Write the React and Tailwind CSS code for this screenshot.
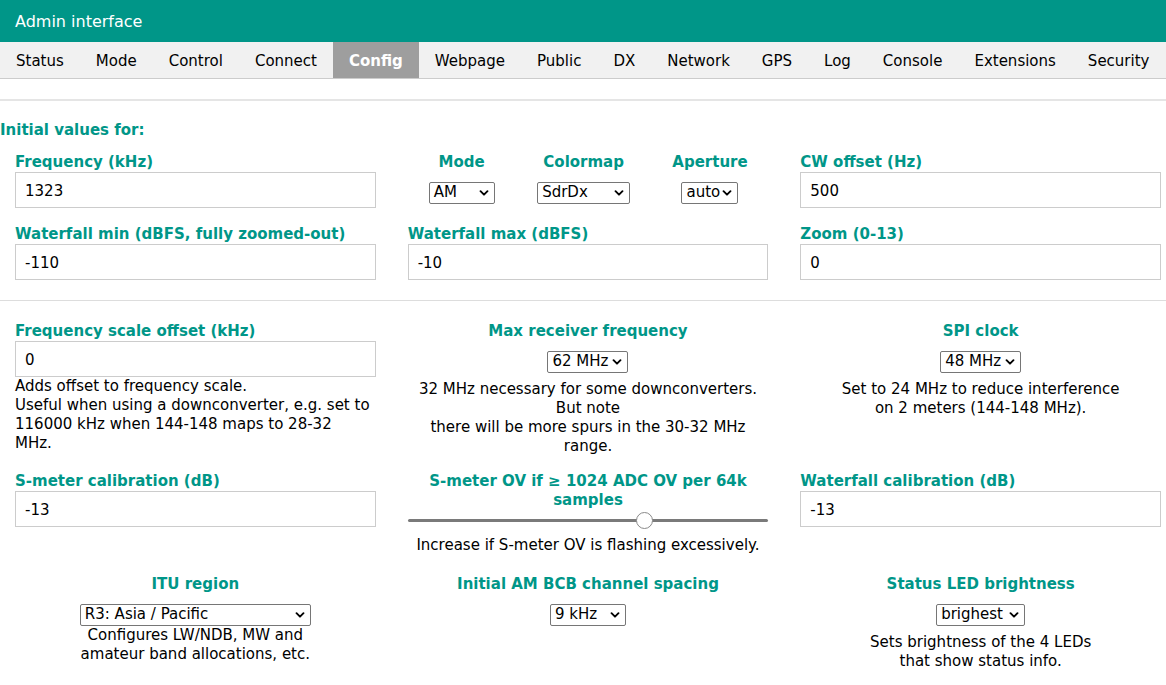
import React from "react";

const tabs = [
  "Status",
  "Mode",
  "Control",
  "Connect",
  "Config",
  "Webpage",
  "Public",
  "DX",
  "Network",
  "GPS",
  "Log",
  "Console",
  "Extensions",
  "Security",
];

const font = { fontFamily: '"DejaVu Sans", Verdana, sans-serif' };

const Chevron = () => (
  <svg className="w-[10px] h-[10px] text-black" viewBox="0 0 10 10" fill="none">
    <path d="M1.5 3.2 L5 6.7 L8.5 3.2" stroke="currentColor" strokeWidth="1.9" strokeLinecap="round" strokeLinejoin="round" />
  </svg>
);

const Select = ({ value, width }) => (
  <div
    className={`inline-flex items-center justify-between h-[22px] border border-[#767676] rounded-[2px] bg-white pl-[4px] pr-[5px] text-[15px] text-black leading-none ${width}`}
  >
    <span>{value}</span>
    <Chevron />
  </div>
);

const Label = ({ children, center = false }) => (
  <div
    className={`text-[15px] font-bold text-[#009688] leading-[19px] ${center ? "text-center" : ""}`}
  >
    {children}
  </div>
);

const Input = ({ value }) => (
  <div className="h-[36px] border border-[#cccccc] flex items-center pl-[9px] pt-[2px] text-[15px] text-black">
    {value}
  </div>
);

const Field = ({ label, value }) => (
  <div>
    <Label>{label}</Label>
    <Input value={value} />
  </div>
);

const Note = ({ children }) => (
  <div className="text-[15px] leading-[19px] text-black text-center">{children}</div>
);

export default function App() {
  return (
    <div className="w-[1166px] h-[685px] bg-white overflow-hidden" style={font}>
      {/* Header */}
      <div className="h-[42px] bg-[#009688] flex items-center pl-[15px] pt-[1px] text-white text-[16px]">
        Admin interface
      </div>

      {/* Tab bar */}
      <div className="h-[37px] bg-[#f1f1f1] border-b border-[#cccccc] flex">
        {tabs.map((t) => (
          <div
            key={t}
            className={`h-[36px] flex items-center pt-[2px] px-[16px] text-[15px] ${
              t === "Config" ? "bg-[#9e9e9e] text-white font-bold" : "text-black"
            }`}
          >
            {t}
          </div>
        ))}
      </div>

      <div className="mt-[20px] border-t-2 border-[#e5e5e5]" />

      {/* Initial values */}
      <div className="mt-[20px] text-[15px] font-bold text-[#009688] leading-[19px]">
        Initial values for:
      </div>

      <div className="grid grid-cols-3 gap-x-[32px] pl-[15px] pr-[5px] mt-[13px]">
        <Field label="Frequency (kHz)" value="1323" />
        <div className="grid grid-cols-[108px_136px_1fr]">
          <div className="flex flex-col items-center">
            <Label center>Mode</Label>
            <div className="mt-[8px]">
              <Select value="AM" width="w-[66px]" />
            </div>
          </div>
          <div className="flex flex-col items-center">
            <Label center>Colormap</Label>
            <div className="mt-[8px]">
              <Select value="SdrDx" width="w-[93px]" />
            </div>
          </div>
          <div className="flex flex-col items-center">
            <Label center>Aperture</Label>
            <div className="mt-[8px]">
              <Select value="auto" width="w-[57px]" />
            </div>
          </div>
        </div>
        <Field label="CW offset (Hz)" value="500" />
      </div>

      <div className="grid grid-cols-3 gap-x-[32px] pl-[15px] pr-[5px] mt-[17px]">
        <Field label="Waterfall min (dBFS, fully zoomed-out)" value="-110" />
        <Field label="Waterfall max (dBFS)" value="-10" />
        <Field label="Zoom (0-13)" value="0" />
      </div>

      <div className="mt-[20px] border-t border-[#dddddd]" />

      {/* Section 2 */}
      <div className="grid grid-cols-3 gap-x-[32px] pl-[15px] pr-[5px] mt-[21px]">
        <div>
          <Field label="Frequency scale offset (kHz)" value="0" />
          <div className="w-[357px] text-[15px] leading-[19px] text-black">
            Adds offset to frequency scale.
            <br />
            Useful when using a downconverter, e.g. set to 116000 kHz when 144-148 maps to 28-32 MHz.
          </div>
        </div>
        <div className="flex flex-col items-center">
          <Label center>Max receiver frequency</Label>
          <div className="mt-[8px]">
            <Select value="62 MHz" width="w-[81px]" />
          </div>
          <div className="mt-[7px]">
            <Note>
              32 MHz necessary for some downconverters. But note
              <br />
              there will be more spurs in the 30-32 MHz range.
            </Note>
          </div>
        </div>
        <div className="flex flex-col items-center">
          <Label center>SPI clock</Label>
          <div className="mt-[8px]">
            <Select value="48 MHz" width="w-[81px]" />
          </div>
          <div className="mt-[7px]">
            <Note>
              Set to 24 MHz to reduce interference
              <br />
              on 2 meters (144-148 MHz).
            </Note>
          </div>
        </div>
      </div>

      <div className="grid grid-cols-3 gap-x-[32px] pl-[15px] pr-[5px] mt-[16px]">
        <Field label="S-meter calibration (dB)" value="-13" />
        <div>
          <Label center>
            S-meter OV if ≥ 1024 ADC OV per 64k
            <br />
            samples
          </Label>
          <div className="relative h-[21px] flex items-center">
            <div className="w-full h-[3px] bg-[#7a7a7a] rounded-full" />
            <div className="absolute left-[65.8%] top-[2px] -ml-[9px] w-[17px] h-[17px] rounded-full bg-white border border-[#8a8a8a]" />
          </div>
          <div className="mt-[5px]">
            <Note>Increase if S-meter OV is flashing excessively.</Note>
          </div>
        </div>
        <Field label="Waterfall calibration (dB)" value="-13" />
      </div>

      {/* Section 3 */}
      <div className="grid grid-cols-3 gap-x-[32px] pl-[15px] pr-[5px] mt-[20px]">
        <div className="flex flex-col items-center">
          <Label center>ITU region</Label>
          <div className="mt-[8px]">
            <Select value="R3: Asia / Pacific" width="w-[231px]" />
          </div>
          <Note>
            Configures LW/NDB, MW and
            <br />
            amateur band allocations, etc.
          </Note>
        </div>
        <div className="flex flex-col items-center">
          <Label center>Initial AM BCB channel spacing</Label>
          <div className="mt-[8px]">
            <Select value="9 kHz" width="w-[76px]" />
          </div>
        </div>
        <div className="flex flex-col items-center">
          <Label center>Status LED brightness</Label>
          <div className="mt-[8px]">
            <Select value="brighest" width="w-[89px]" />
          </div>
          <div className="mt-[7px]">
            <Note>
              Sets brightness of the 4 LEDs
              <br />
              that show status info.
            </Note>
          </div>
        </div>
      </div>
    </div>
  );
}
